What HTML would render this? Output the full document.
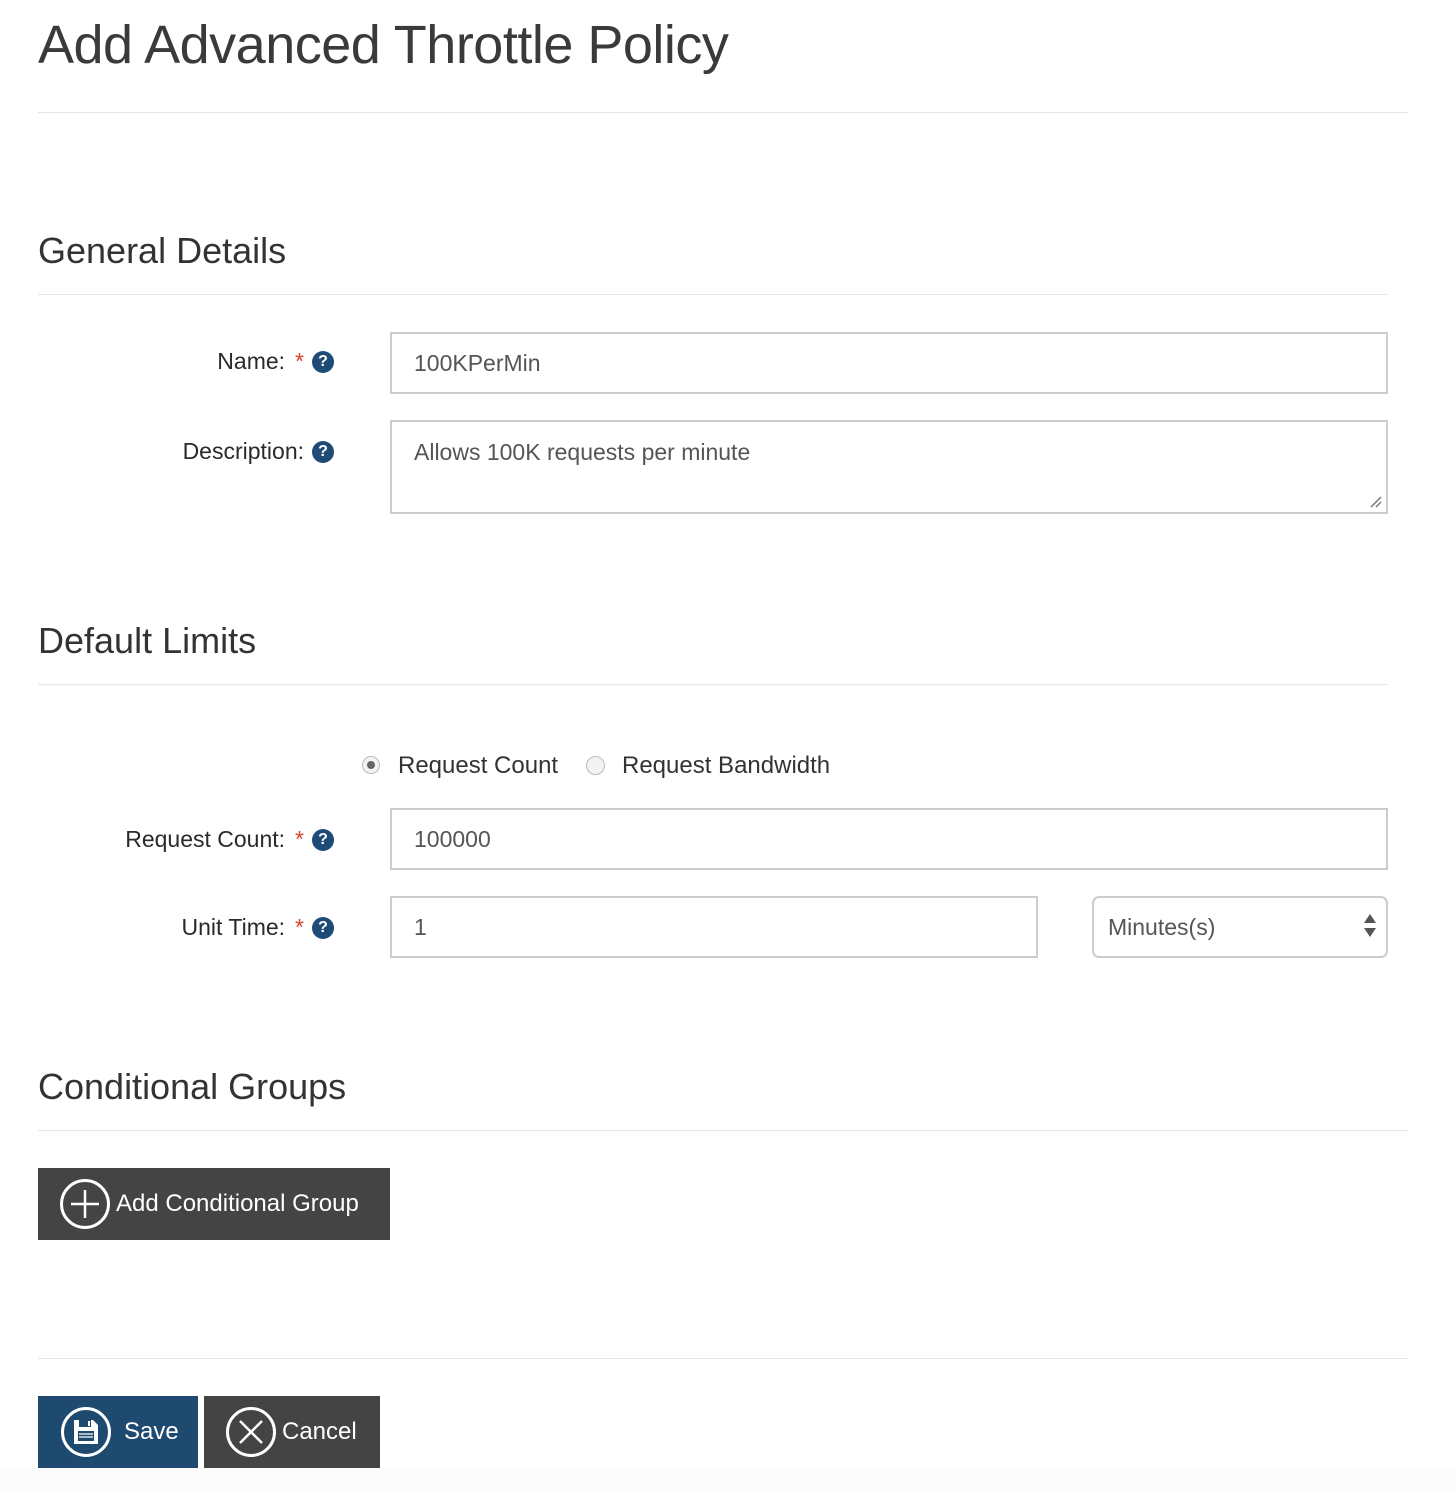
<!DOCTYPE html>
<html><head><meta charset="utf-8"><style>
body{margin:0;width:1456px;height:1492px;background:#fff;font-family:"Liberation Sans",sans-serif;color:#333;position:relative;overflow:hidden}
.a{position:absolute}
h1{position:absolute;left:38px;top:14px;margin:0;font-weight:normal;font-size:54px;color:#3a3a3a;letter-spacing:-0.5px}
.hr{position:absolute;height:1px;background:#e6e6e6;left:38px}
h2{position:absolute;left:38px;margin:0;font-weight:normal;font-size:36px;color:#333}
.lab{position:absolute;right:1122px;font-size:23px;color:#2a2a2a;white-space:nowrap;display:flex;align-items:center}
.star{color:#d9402b;margin-left:10px}
.q{display:inline-block;width:22px;height:22px;border-radius:50%;background:#1f4b77;color:#fff;font-size:16px;font-weight:bold;text-align:center;line-height:22px;margin-left:8px}
.inp{position:absolute;border:2px solid #ccc;box-sizing:border-box;font-size:23px;color:#555;padding-left:22px;background:#fff}
.btn{position:absolute;color:#fff;font-size:24px;display:flex;align-items:center}
</style></head><body>
<h1>Add Advanced Throttle Policy</h1>
<div class="hr" style="top:112px;width:1370px"></div>

<h2 style="top:230px">General Details</h2>
<div class="hr" style="top:294px;width:1350px"></div>
<div class="lab" style="top:348px">Name:<span class="star">*</span><span class="q">?</span></div>
<div class="inp" style="left:390px;top:332px;width:998px;height:62px;line-height:58px">100KPerMin</div>
<div class="lab" style="top:438px">Description:<span class="q">?</span></div>
<div class="inp" style="left:390px;top:420px;width:998px;height:94px;line-height:60px;padding-top:0">Allows 100K requests per minute</div>
<svg class="a" style="left:1368px;top:494px" width="16" height="16"><path d="M3 13L13 3M8 13L13 8" stroke="#777" stroke-width="1.5"/></svg>

<h2 style="top:620px">Default Limits</h2>
<div class="hr" style="top:684px;width:1350px"></div>
<div class="a" style="left:362px;top:756px;width:18px;height:18px;border:1px solid #bbb;border-radius:50%;background:#f3f3f3;box-sizing:border-box"><div style="width:8px;height:8px;border-radius:50%;background:#666;margin:4px"></div></div>
<div class="a" style="left:398px;top:752px;font-size:24px;color:#333">Request Count</div>
<div class="a" style="left:586px;top:756px;width:19px;height:19px;border:1px solid #bbb;border-radius:50%;background:#f3f3f3;box-sizing:border-box"></div>
<div class="a" style="left:622px;top:752px;font-size:24px;color:#333">Request Bandwidth</div>
<div class="lab" style="top:826px">Request Count:<span class="star">*</span><span class="q">?</span></div>
<div class="inp" style="left:390px;top:808px;width:998px;height:62px;line-height:58px">100000</div>
<div class="lab" style="top:914px">Unit Time:<span class="star">*</span><span class="q">?</span></div>
<div class="inp" style="left:390px;top:896px;width:648px;height:62px;line-height:58px">1</div>
<div class="inp" style="left:1092px;top:896px;width:296px;height:62px;line-height:58px;border-radius:7px;padding-left:14px">Minutes(s)</div>
<svg class="a" style="left:1363px;top:912px" width="14" height="28"><path d="M1 11L7 2L13 11Z M1 16L7 25L13 16Z" fill="#555"/></svg>

<h2 style="top:1066px">Conditional Groups</h2>
<div class="hr" style="top:1130px;width:1370px"></div>
<div class="btn" style="left:38px;top:1168px;width:352px;height:72px;background:#444">
<svg style="margin-left:21px" width="52" height="52"><circle cx="26" cy="26" r="23.5" fill="none" stroke="#fff" stroke-width="3"/><path d="M26 12V40M12 26H40" stroke="#fff" stroke-width="2.5"/></svg>
<span style="margin-left:5px">Add Conditional Group</span></div>

<div class="hr" style="top:1358px;width:1370px"></div>
<div class="a" style="left:0;top:1468px;width:1456px;height:24px;background:#fbfbfb"></div>
<div class="btn" style="left:38px;top:1396px;width:160px;height:72px;background:#1f4a70">
<svg style="margin-left:22px" width="52" height="52"><circle cx="26" cy="26" r="23.5" fill="none" stroke="#fff" stroke-width="3"/><path d="M14 14H33L38 19V38H14Z" fill="#fff"/><rect x="19" y="14" width="12" height="7" fill="#1f4a70"/><rect x="28" y="15" width="2" height="5" fill="#fff"/><rect x="18" y="25" width="16" height="10" fill="#1f4a70"/><path d="M19 28H33M19 31H33" stroke="#fff" stroke-width="1.2"/></svg>
<span style="margin-left:12px">Save</span></div>
<div class="btn" style="left:204px;top:1396px;width:176px;height:72px;background:#444">
<svg style="margin-left:21px" width="52" height="52"><circle cx="26" cy="26" r="23.5" fill="none" stroke="#fff" stroke-width="3"/><path d="M15 15L37 37M37 15L15 37" stroke="#fff" stroke-width="2.5"/></svg>
<span style="margin-left:5px">Cancel</span></div>
</body></html>
